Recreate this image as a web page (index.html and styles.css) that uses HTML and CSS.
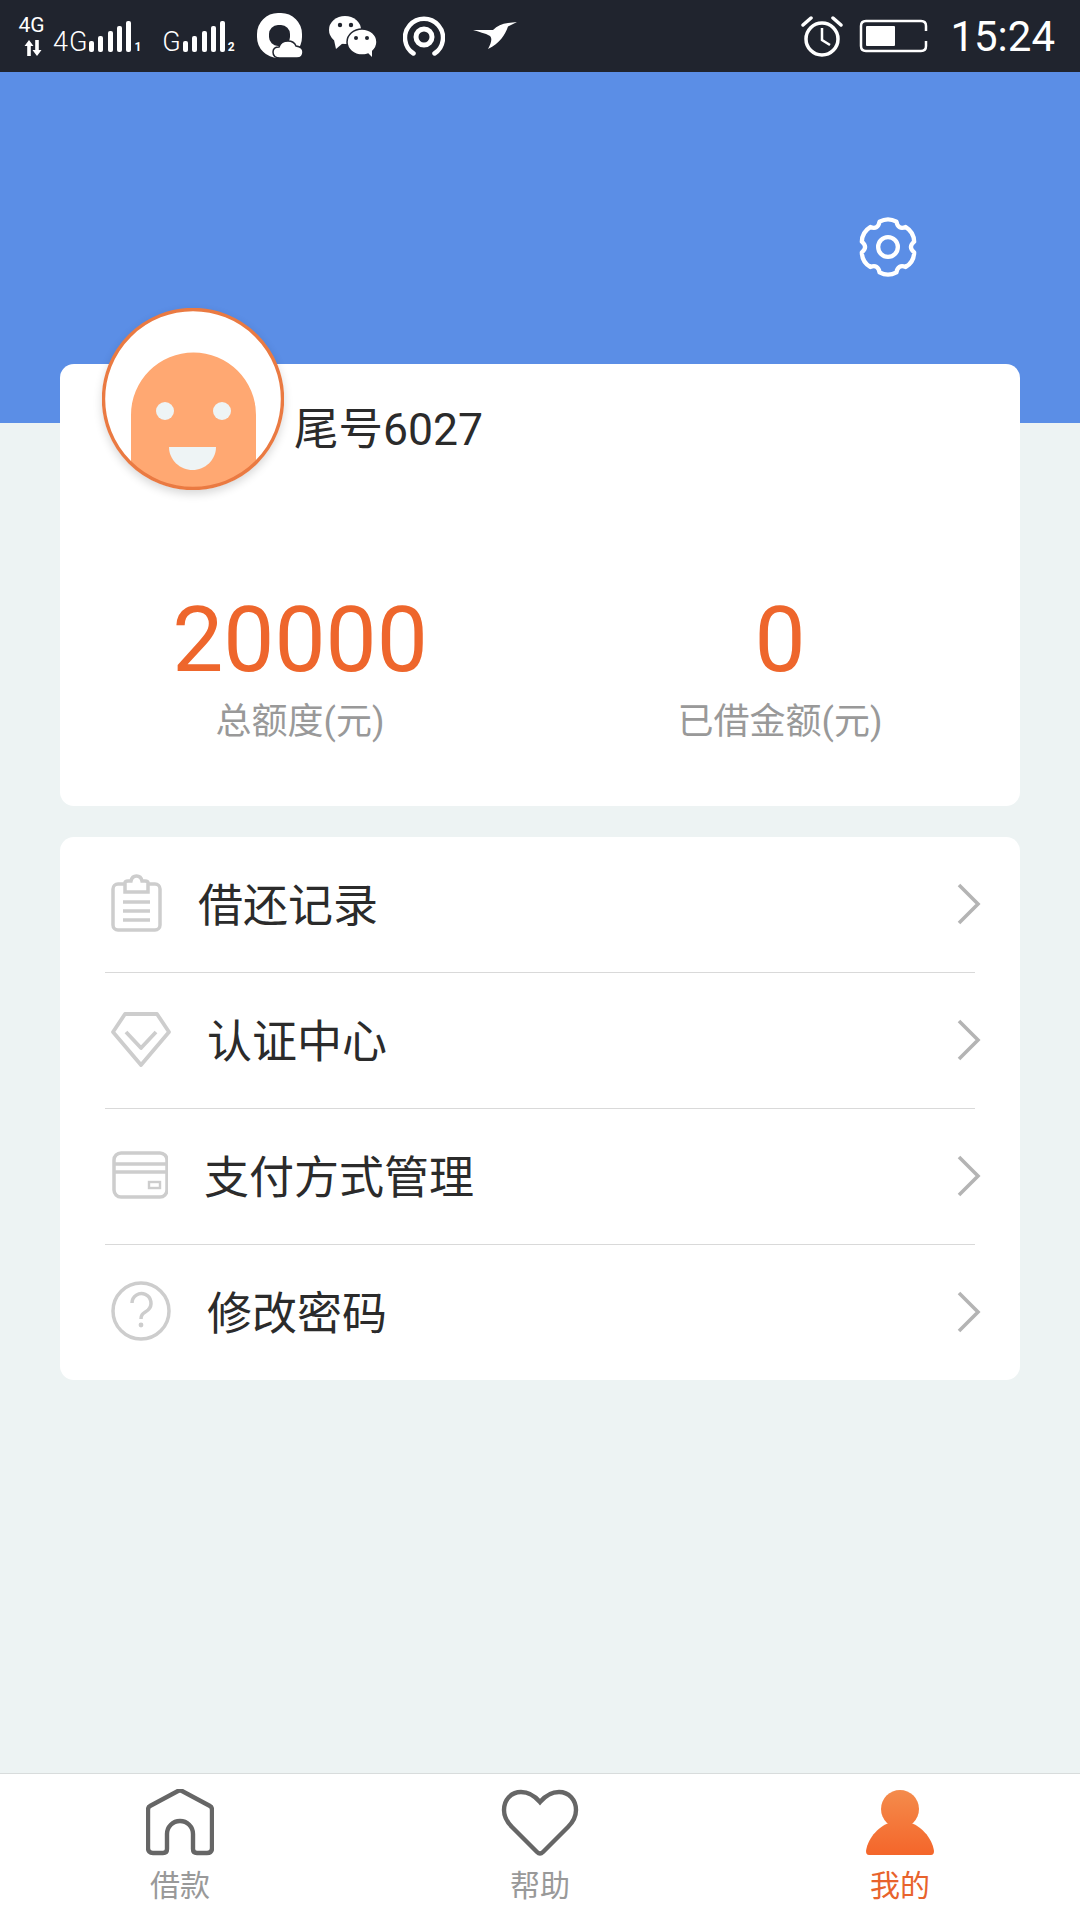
FILE: index.html
```html
<!DOCTYPE html>
<html lang="zh-CN">
<head>
    <meta charset="UTF-8">
    <meta name="viewport" content="width=device-width, initial-scale=1.0">
    <title>我的</title>
    <link rel="stylesheet" href="styles.css">
</head>
<body>
    <div class="status-bar">
        <div class="net">
            <span class="net-label">4G</span>
            <svg width="18" height="16" viewBox="0 0 18 16"><path d="M5 0 L0.5 6 H3.2 V16 H6.8 V6 H9.5 Z M11.2 0 V10 H8.5 L13 16 L17.5 10 H14.8 V0 Z" fill="#fff"/></svg>
        </div>
        <div class="sim sim-first">
            <span class="sim-type">4G</span>
            <svg class="bars" width="42" height="31" viewBox="0 0 42 31" fill="#fff">
                <rect x="0" y="20" width="5" height="11" rx="2"/>
                <rect x="9" y="15" width="5" height="16" rx="2"/>
                <rect x="19" y="10" width="5" height="21" rx="2"/>
                <rect x="28" y="5" width="5" height="26" rx="2"/>
                <rect x="37" y="0" width="5" height="31" rx="2"/>
            </svg>
            <span class="sim-num">1</span>
        </div>
        <div class="sim sim-second">
            <span class="sim-type">G</span>
            <svg class="bars" width="42" height="31" viewBox="0 0 42 31" fill="#fff">
                <rect x="0" y="20" width="5" height="11" rx="2"/>
                <rect x="9" y="15" width="5" height="16" rx="2"/>
                <rect x="19" y="10" width="5" height="21" rx="2"/>
                <rect x="28" y="5" width="5" height="26" rx="2"/>
                <rect x="37" y="0" width="5" height="31" rx="2"/>
            </svg>
            <span class="sim-num">2</span>
        </div>
        <div class="notify-icons">
            <svg width="46" height="46" viewBox="0 0 46 46">
                <rect x="6" y="6" width="33" height="33" rx="15" fill="none" stroke="#fff" stroke-width="12"/>
                <path d="M23 45 Q16 45 16 39 Q16 34 22 34 Q24 28 31 28 Q37 28 39 33 Q46 34 46 39 Q46 45 40 45 Z" fill="#fff" stroke="#20242e" stroke-width="1.5"/>
            </svg>
            <svg width="48" height="41" viewBox="0 0 48 41">
                <ellipse cx="16" cy="14" rx="16" ry="14" fill="#fff"/>
                <path d="M5 24 L7 33 L14 27 Z" fill="#fff"/>
                <ellipse cx="33" cy="26" rx="15" ry="13" fill="#fff" stroke="#20242e" stroke-width="1.5"/>
                <path d="M38 36 L43 41 L43 33 Z" fill="#fff"/>
                <circle cx="11" cy="9" r="2.2" fill="#20242e"/>
                <circle cx="22" cy="9" r="2.2" fill="#20242e"/>
                <circle cx="27" cy="22" r="2" fill="#20242e"/>
                <circle cx="38" cy="22" r="2" fill="#20242e"/>
            </svg>
            <svg width="42" height="41" viewBox="0 0 42 41" fill="none" stroke="#fff">
                <path d="M10.5 37.5 A19 19 0 1 1 31.5 37.5" stroke-width="4.5" stroke-linecap="round"/>
                <circle cx="21" cy="21" r="8" stroke-width="5"/>
            </svg>
            <svg class="bird" width="44" height="28" viewBox="0 0 44 28">
                <path d="M0 8 L20 8 C24 4 29 1.5 35 1 L44 0 L35 4.5 C32 13 27 21 15 27 C19 20 19 16 17 14 C12 11 6 10 0 8 Z" fill="#fff"/>
            </svg>
        </div>
        <div class="status-right">
            <svg class="alarm" width="42" height="42" viewBox="0 0 42 42" fill="none" stroke="#fff" stroke-width="3.5">
                <circle cx="21" cy="24" r="16"/>
                <path d="M21 13 V25 L29 30" stroke-width="2.5"/>
                <path d="M2 10 L10 3 M40 10 L32 3" stroke-linecap="round"/>
            </svg>
            <svg class="battery" width="70" height="34" viewBox="0 0 70 34" fill="none">
                <path d="M67 12 V7 Q67 2 62 2 H7 Q2 2 2 7 V27 Q2 32 7 32 H62 Q67 32 67 27 V22" stroke="#fff" stroke-width="2.5"/>
                <rect x="7" y="7" width="29" height="20" rx="1" fill="#fff"/>
            </svg>
            <span class="time">15:24</span>
        </div>
    </div>

    <div class="hero">
        <svg class="settings" width="60" height="60" viewBox="-32 -32 64 64" fill="none" stroke="#fff" stroke-width="4.6" stroke-linejoin="round">
            <path d="M-9 -27 Q0 -32 9 -27 Q10.5 -18.2 18.9 -21.3 Q27.7 -16 27.9 -5.7 Q21 0 27.9 5.7 Q27.7 16 18.9 21.3 Q10.5 18.2 9 27 Q0 32 -9 27 Q-10.5 18.2 -18.9 21.3 Q-27.7 16 -27.9 5.7 Q-21 0 -27.9 -5.7 Q-27.7 -16 -18.9 -21.3 Q-10.5 -18.2 -9 -27 Z"/>
            <circle r="10.5"/>
        </svg>
    </div>

    <main class="content">
        <section class="card account">
            <div class="avatar">
                <svg width="182" height="182" viewBox="0 0 182 182">
                    <defs><clipPath id="faceClip"><circle cx="91" cy="91" r="89"/></clipPath></defs>
                    <circle cx="91" cy="91" r="89.5" fill="#fff"/>
                    <path d="M29 182 V107 A62.5 62.5 0 0 1 154 107 V182 Z" fill="#ffa872" clip-path="url(#faceClip)"/>
                    <circle cx="63" cy="103" r="9" fill="#eef4f5"/>
                    <circle cx="120" cy="103" r="9" fill="#eef4f5"/>
                    <path d="M67 139 H114 C114 152 103 162 90.5 162 C78 162 67 152 67 139 Z" fill="#eef4f5"/>
                    <circle cx="91" cy="91" r="89.5" fill="none" stroke="#ea7a42" stroke-width="3.4"/>
                </svg>
            </div>
            <div class="account-name">尾号6027</div>
            <div class="stats">
                <div class="stat">
                    <div class="stat-value">20000</div>
                    <div class="stat-label">总额度(元)</div>
                </div>
                <div class="stat">
                    <div class="stat-value">0</div>
                    <div class="stat-label">已借金额(元)</div>
                </div>
            </div>
        </section>

        <section class="card menu">
            <div class="menu-row">
                <svg width="51" height="58" viewBox="0 0 51 58" fill="none" stroke="#cdcdcd" stroke-width="3.5">
                    <rect x="2" y="10" width="47" height="46" rx="5"/>
                    <path d="M14 18 V9 Q14 7 17 7 H20 Q21 2 25.5 2 Q30 2 31 7 H34 Q37 7 37 9 V18 Z" fill="#fff"/>
                    <path d="M12 28 H39 M12 37 H39 M12 46 H39"/>
                </svg>
                <span class="menu-text">借还记录</span>
                <svg class="chevron" width="24" height="42" viewBox="0 0 24 42" fill="none" stroke="#b4b4b4" stroke-width="3.6"><path d="M2 2 L21 21 L2 40"/></svg>
            </div>
            <div class="menu-row">
                <svg width="60" height="56" viewBox="0 0 60 56" fill="none" stroke="#cdcdcd" stroke-width="3.8" stroke-linejoin="round">
                    <path d="M14 3 H46 L58 21 L30 54 L2 21 Z"/>
                    <path d="M15 21 L30 37 L45 21"/>
                </svg>
                <span class="menu-text">认证中心</span>
                <svg class="chevron" width="24" height="42" viewBox="0 0 24 42" fill="none" stroke="#b4b4b4" stroke-width="3.6"><path d="M2 2 L21 21 L2 40"/></svg>
            </div>
            <div class="menu-row">
                <svg class="icon-card" width="56" height="48" viewBox="0 0 56 48" fill="none" stroke="#cdcdcd" stroke-width="3.5">
                    <rect x="2" y="2" width="53" height="44" rx="7"/>
                    <path d="M2 13 H55 M2 21 H55"/>
                    <rect x="37" y="31" width="11" height="6" stroke-width="2.4"/>
                </svg>
                <span class="menu-text">支付方式管理</span>
                <svg class="chevron" width="24" height="42" viewBox="0 0 24 42" fill="none" stroke="#b4b4b4" stroke-width="3.6"><path d="M2 2 L21 21 L2 40"/></svg>
            </div>
            <div class="menu-row">
                <svg width="60" height="60" viewBox="0 0 60 60" fill="none" stroke="#cdcdcd" stroke-width="3.5">
                    <circle cx="30" cy="30" r="28"/>
                    <path d="M21 22 A9.5 9.5 0 1 1 37 29 C32 33 30 33 30 38"/>
                    <circle cx="30" cy="44" r="2.4" fill="#cdcdcd" stroke="none"/>
                </svg>
                <span class="menu-text">修改密码</span>
                <svg class="chevron" width="24" height="42" viewBox="0 0 24 42" fill="none" stroke="#b4b4b4" stroke-width="3.6"><path d="M2 2 L21 21 L2 40"/></svg>
            </div>
        </section>
    </main>

    <nav class="tabbar">
        <div class="tab">
            <svg width="68" height="67" viewBox="0 0 68 67" fill="none" stroke="#666" stroke-width="4.4" stroke-linejoin="round">
                <path d="M2 21 Q2 18 4 17 L32 2 Q34 1 36 2 L64 17 Q66 18 66 21 V59 Q66 64 61 64 H51 Q47 64 47 60 V45 A13 13 0 0 0 21 45 V60 Q21 64 17 64 H7 Q2 64 2 59 Z"/>
            </svg>
            <span class="tab-label">借款</span>
        </div>
        <div class="tab">
            <svg width="78" height="67" viewBox="0 0 78 67" fill="none" stroke="#666" stroke-width="4.4">
                <path d="M39 13 C33 6 27 3 20 3 C10 3 3 11 3 21 C3 28 6 33 11 38 L36 63 Q39 66 42 63 L67 38 C72 33 75 28 75 21 C75 11 68 3 58 3 C51 3 45 6 39 13 Z"/>
            </svg>
            <span class="tab-label">帮助</span>
        </div>
        <div class="tab tab-active">
            <svg width="68" height="67" viewBox="0 0 68 67">
                <defs>
                    <linearGradient id="personFill" gradientUnits="userSpaceOnUse" x1="0" y1="0" x2="0" y2="67">
                        <stop offset="0" stop-color="#f48c4c"/>
                        <stop offset="1" stop-color="#f4652a"/>
                    </linearGradient>
                </defs>
                <circle cx="34" cy="20" r="19" fill="url(#personFill)"/>
                <path d="M3 66 Q0 66 0 62 C2 48 14 36 26 33 H42 C54 36 66 48 68 62 Q68 66 65 66 Z" fill="url(#personFill)"/>
            </svg>
            <span class="tab-label">我的</span>
        </div>
    </nav>
</body>
</html>
```

FILE: styles.css
```css
* {
    box-sizing: border-box;
}
body {
    margin: 0;
    height: 1920px;
    display: flex;
    flex-direction: column;
    font-family: Roboto, "Noto Sans CJK SC", sans-serif;
    background-color: #edf3f3;
    overflow: hidden;
}
.status-bar {
    height: 72px;
    flex: none;
    display: flex;
    align-items: flex-start;
    padding-left: 19px;
    background-color: #20242e;
    color: white;
}
.net {
    width: 25px;
    margin-top: 15px;
    display: flex;
    flex-direction: column;
    align-items: center;
}
.net-label {
    font-size: 21px;
    line-height: 21px;
}
.net svg {
    margin-top: 4px;
    margin-left: 3px;
}
.sim {
    display: flex;
    align-items: flex-end;
    height: 31px;
    margin-top: 21px;
}
.sim-first {
    margin-left: 9px;
}
.sim-second {
    margin-left: 21px;
}
.sim-type {
    font-size: 27px;
    line-height: 20px;
    font-weight: 300;
    letter-spacing: 1px;
    margin-right: 1px;
}
.sim-num {
    font-size: 12px;
    line-height: 10px;
    margin-left: 3px;
    font-weight: 700;
}
.notify-icons {
    display: flex;
    align-items: center;
    gap: 26px;
    margin-left: 22px;
    height: 72px;
}
.bird {
    margin-left: 2px;
}
.status-right {
    margin-left: auto;
    display: flex;
    align-items: center;
    height: 72px;
    padding-right: 25px;
}
.alarm {
    margin-bottom: 1px;
}
.battery {
    margin-left: 16px;
}
.time {
    font-size: 42px;
    margin-left: 21px;
}
.hero {
    height: 351px;
    flex: none;
    background-color: #5b8ee6;
    display: flex;
    justify-content: flex-end;
    padding: 145px 162px 0 0;
}
.settings {
    display: block;
}
.content {
    flex: 1;
    padding: 0 60px;
    margin-top: -59px;
    display: flex;
    flex-direction: column;
    gap: 31px;
}
.card {
    background: white;
    border-radius: 14px;
}
.account {
    position: relative;
    height: 442px;
    padding-top: 36px;
}
.avatar {
    position: absolute;
    top: -56px;
    left: 42px;
    width: 182px;
    height: 182px;
    border-radius: 50%;
    box-shadow: 0 4px 10px rgba(0, 0, 0, 0.16);
}
.avatar svg {
    display: block;
}
.account-name {
    padding-left: 234px;
    font-size: 44.5px;
    line-height: 60px;
    color: #2b2b2b;
}
.stats {
    display: grid;
    grid-template-columns: 1fr 1fr;
    margin-top: 130px;
}
.stat {
    text-align: center;
}
.stat-value {
    font-size: 91px;
    line-height: 100px;
    color: #ee662c;
}
.stat-label {
    font-size: 36px;
    line-height: 50px;
    margin-top: 7px;
    color: #999;
}
.menu {
    padding: 0 45px;
}
.menu-row {
    height: 136px;
    display: flex;
    align-items: center;
    gap: 36px;
    padding: 0 0 3px 6px;
    border-bottom: 1px solid #d9d9d9;
}
.menu-row:last-child {
    height: 135px;
    border-bottom: none;
}
.icon-card {
    margin-left: 1px;
}
.menu-text {
    font-size: 45px;
    margin-bottom: 2px;
    color: #2b2b2b;
}
.chevron {
    margin-left: auto;
    margin-right: -6px;
    margin-top: 2px;
}
.tabbar {
    height: 147px;
    flex: none;
    display: grid;
    grid-template-columns: repeat(3, 1fr);
    background: white;
    border-top: 1px solid #d8dcdc;
}
.tab {
    display: flex;
    flex-direction: column;
    align-items: center;
    padding-top: 15px;
}
.tab-label {
    font-size: 30px;
    line-height: 40px;
    margin-top: 10px;
    color: #999;
}
.tab-active .tab-label {
    color: #e8632c;
}
```
